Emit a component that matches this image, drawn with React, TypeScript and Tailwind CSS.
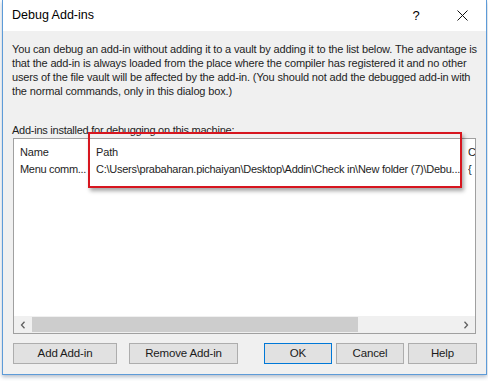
import React from "react";

const font = { fontFamily: '"Liberation Sans", Arial, sans-serif' };

function WinButton({ label, width, primary }: { label: string; width: string; primary?: boolean }) {
  return (
    <button
      className={`${width} h-[21px] bg-[#e1e1e1] text-[11.5px] text-[#1b1b1b] leading-none flex items-center justify-center border ${
        primary ? "border-[#0078d7]" : "border-[#adadad]"
      }`}
    >
      {label}
    </button>
  );
}

export default function App() {
  return (
    <div className="w-[488px] h-[381px] bg-white overflow-hidden" style={font}>
      <div className="relative ml-[2px] w-[485px] h-[375px] border-x border-b border-[#5d9bd8] bg-[#f0f0f0] shadow-[0_2px_4px_rgba(90,110,140,0.45)]">
        {/* Title bar */}
        <div className="h-[31px] bg-white flex items-center pl-[9px] text-[12.5px] text-black">
          <span>Debug Add-ins</span>
          <span className="ml-auto w-[14px] text-center text-[13px] mr-[34px]">?</span>
          <svg width="11" height="11" viewBox="0 0 11 11" className="mr-[18px]">
            <path d="M0.5 0.5 L10.5 10.5 M10.5 0.5 L0.5 10.5" stroke="#111" strokeWidth="1" fill="none" />
          </svg>
        </div>

        {/* Body */}
        <div className="px-[9px] text-[11px] tracking-[-0.15px] text-[#1e1e1e]">
          <p className="mt-[11px] leading-[14px] whitespace-nowrap">
            You can debug an add-in without adding it to a vault by adding it to the list below. The advantage is
            <br />
            that the add-in is always loaded from the place where the compiler has registered it and no other
            <br />
            users of the file vault will be affected by the add-in. (You should not add the debugged add-in with
            <br />
            the normal commands, only in this dialog box.)
          </p>

          <div className="mt-[25px] leading-[14px] tracking-[-0.25px]">Add-ins installed for debugging on this machine:</div>

          {/* List box */}
          <div className="mt-[1px] ml-px w-[463px] h-[196px] border border-[#a0a0a0] bg-white flex flex-col">
            <div className="flex-1 pt-[5px] leading-[17px] overflow-hidden">
              <div className="flex whitespace-nowrap">
                <div className="w-[82px] pl-[6px] shrink-0">Name</div>
                <div className="w-[372px] shrink-0">Path</div>
                <div className="w-[7px] shrink-0 overflow-hidden">C</div>
              </div>
              <div className="flex whitespace-nowrap">
                <div className="w-[82px] pl-[6px] shrink-0 tracking-[-0.3px]">Menu comm...</div>
                <div className="w-[372px] shrink-0 overflow-hidden tracking-[-0.25px]">
                  C:\Users\prabaharan.pichaiyan\Desktop\Addin\Check in\New folder (7)\Debu...
                </div>
                <div className="w-[7px] shrink-0 overflow-hidden">{"{"}</div>
              </div>
            </div>
            {/* Horizontal scrollbar */}
            <div className="h-[17px] bg-[#f0f0f0] flex items-center">
              <div className="w-[18px] h-full flex items-center justify-center">
                <svg width="6" height="8" viewBox="0 0 6 8">
                  <path d="M4.5 0.8 L1.5 4 L4.5 7.2" stroke="#606060" strokeWidth="1.3" fill="none" />
                </svg>
              </div>
              <div className="w-[326px] h-[15px] bg-[#cdcdcd]" />
              <div className="flex-1" />
              <div className="w-[18px] h-full flex items-center justify-center">
                <svg width="6" height="8" viewBox="0 0 6 8">
                  <path d="M1.5 0.8 L4.5 4 L1.5 7.2" stroke="#606060" strokeWidth="1.3" fill="none" />
                </svg>
              </div>
            </div>
          </div>

          {/* Buttons */}
          <div className="mt-[9px] ml-px flex items-center">
            <WinButton label="Add Add-in" width="w-[104px]" />
            <div className="ml-[12px]">
              <WinButton label="Remove Add-in" width="w-[109px]" />
            </div>
            <div className="ml-[26px] flex gap-[4px]">
              <WinButton label="OK" width="w-[68px]" primary />
              <WinButton label="Cancel" width="w-[68px]" />
              <WinButton label="Help" width="w-[69px]" />
            </div>
          </div>
        </div>

        {/* Red highlight annotation */}
        <div className="absolute left-[85px] top-[132px] w-[374px] h-[56px] border-[2.5px] border-[#d7161f] shadow-[2px_3px_4px_rgba(0,0,0,0.35)]" />
      </div>
    </div>
  );
}
